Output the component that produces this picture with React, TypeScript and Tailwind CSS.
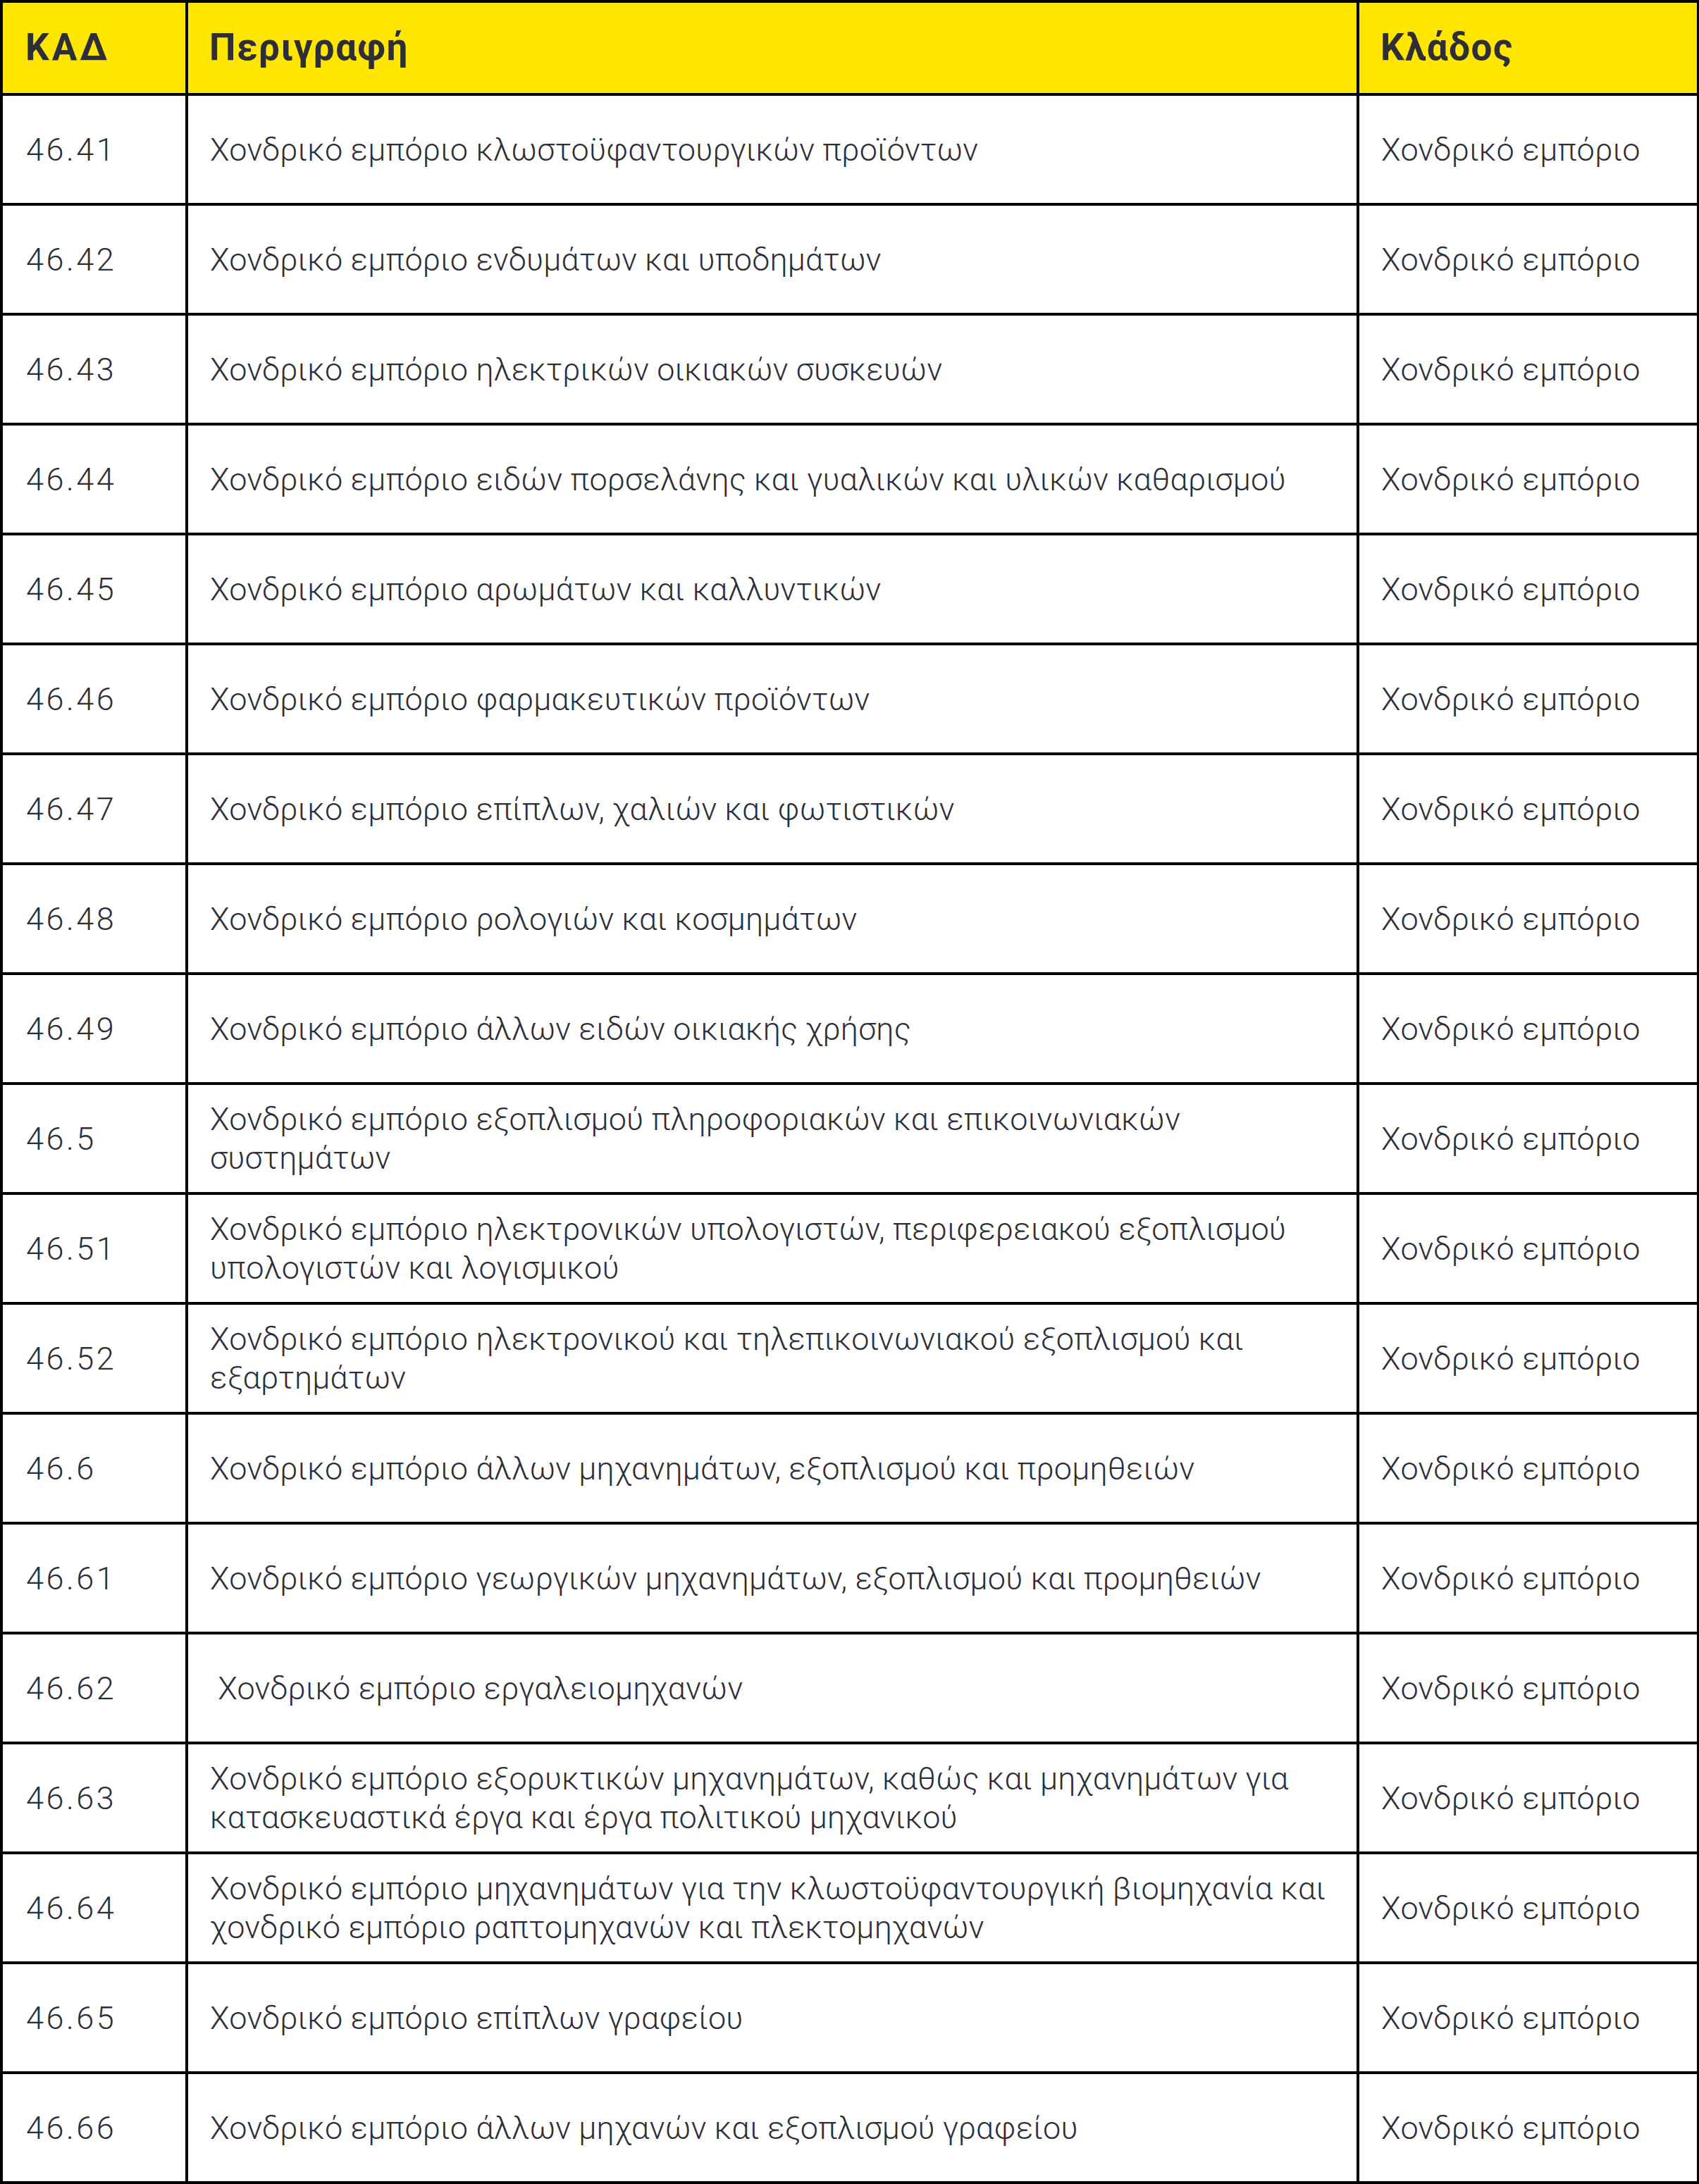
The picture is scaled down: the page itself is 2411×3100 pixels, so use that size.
import React from "react";

const rows: [string, string][] = [
  ["46.41", "Χονδρικό εμπόριο κλωστοϋφαντουργικών προϊόντων"],
  ["46.42", "Χονδρικό εμπόριο ενδυμάτων και υποδημάτων"],
  ["46.43", "Χονδρικό εμπόριο ηλεκτρικών οικιακών συσκευών"],
  ["46.44", "Χονδρικό εμπόριο ειδών πορσελάνης και γυαλικών και υλικών καθαρισμού"],
  ["46.45", "Χονδρικό εμπόριο αρωμάτων και καλλυντικών"],
  ["46.46", "Χονδρικό εμπόριο φαρμακευτικών προϊόντων"],
  ["46.47", "Χονδρικό εμπόριο επίπλων, χαλιών και φωτιστικών"],
  ["46.48", "Χονδρικό εμπόριο ρολογιών και κοσμημάτων"],
  ["46.49", "Χονδρικό εμπόριο άλλων ειδών οικιακής χρήσης"],
  ["46.5", "Χονδρικό εμπόριο εξοπλισμού πληροφοριακών και επικοινωνιακών συστημάτων"],
  ["46.51", "Χονδρικό εμπόριο ηλεκτρονικών υπολογιστών, περιφερειακού εξοπλισμού υπολογιστών και λογισμικού"],
  ["46.52", "Χονδρικό εμπόριο ηλεκτρονικού και τηλεπικοινωνιακού εξοπλισμού και εξαρτημάτων"],
  ["46.6", "Χονδρικό εμπόριο άλλων μηχανημάτων, εξοπλισμού και προμηθειών"],
  ["46.61", "Χονδρικό εμπόριο γεωργικών μηχανημάτων, εξοπλισμού και προμηθειών"],
  ["46.62", "\u00a0Χονδρικό εμπόριο εργαλειομηχανών"],
  ["46.63", "Χονδρικό εμπόριο εξορυκτικών μηχανημάτων, καθώς και μηχανημάτων για κατασκευαστικά έργα και έργα πολιτικού μηχανικού"],
  ["46.64", "Χονδρικό εμπόριο μηχανημάτων για την κλωστοϋφαντουργική βιομηχανία και χονδρικό εμπόριο ραπτομηχανών και πλεκτομηχανών"],
  ["46.65", "Χονδρικό εμπόριο επίπλων γραφείου"],
  ["46.66", "Χονδρικό εμπόριο άλλων μηχανών και εξοπλισμού γραφείου"],
];

export default function App() {
  return (
    <div className="bg-white w-[2411px]" style={{ fontFamily: "Roboto, 'Noto Sans', sans-serif" }}>
      <table className="table-fixed border-collapse w-[2408px] text-[#2e2e38]">
        <colgroup>
          <col className="w-[263px]" />
          <col className="w-[1662px]" />
          <col className="w-[483px]" />
        </colgroup>
        <thead>
          <tr className="h-[132px] bg-[#ffe600]">
            <th className="border-[4px] border-black text-left align-middle pl-[32px] text-[53px] font-bold tracking-[4px]">ΚΑΔ</th>
            <th className="border-[4px] border-black text-left align-middle pl-[30px] text-[53px] font-bold tracking-[1.5px]">Περιγραφή</th>
            <th className="border-[4px] border-black text-left align-middle pl-[30px] text-[53px] font-bold tracking-[1.5px]">Κλάδος</th>
          </tr>
        </thead>
        <tbody>
          {rows.map(([code, desc]) => (
            <tr key={code} className="h-[156px]">
              <td className="border-[4px] border-black align-middle pl-[33px] text-[45px] font-light leading-[55px] tracking-[3.5px]">{code}</td>
              <td className="border-[4px] border-black align-middle pl-[31px] pr-[24px] text-[45px] font-light leading-[55px] tracking-[0.2px]">{desc}</td>
              <td className="border-[4px] border-black align-middle pl-[31px] text-[45px] font-light leading-[55px] tracking-[0.3px]">Χονδρικό εμπόριο</td>
            </tr>
          ))}
        </tbody>
      </table>
    </div>
  );
}
